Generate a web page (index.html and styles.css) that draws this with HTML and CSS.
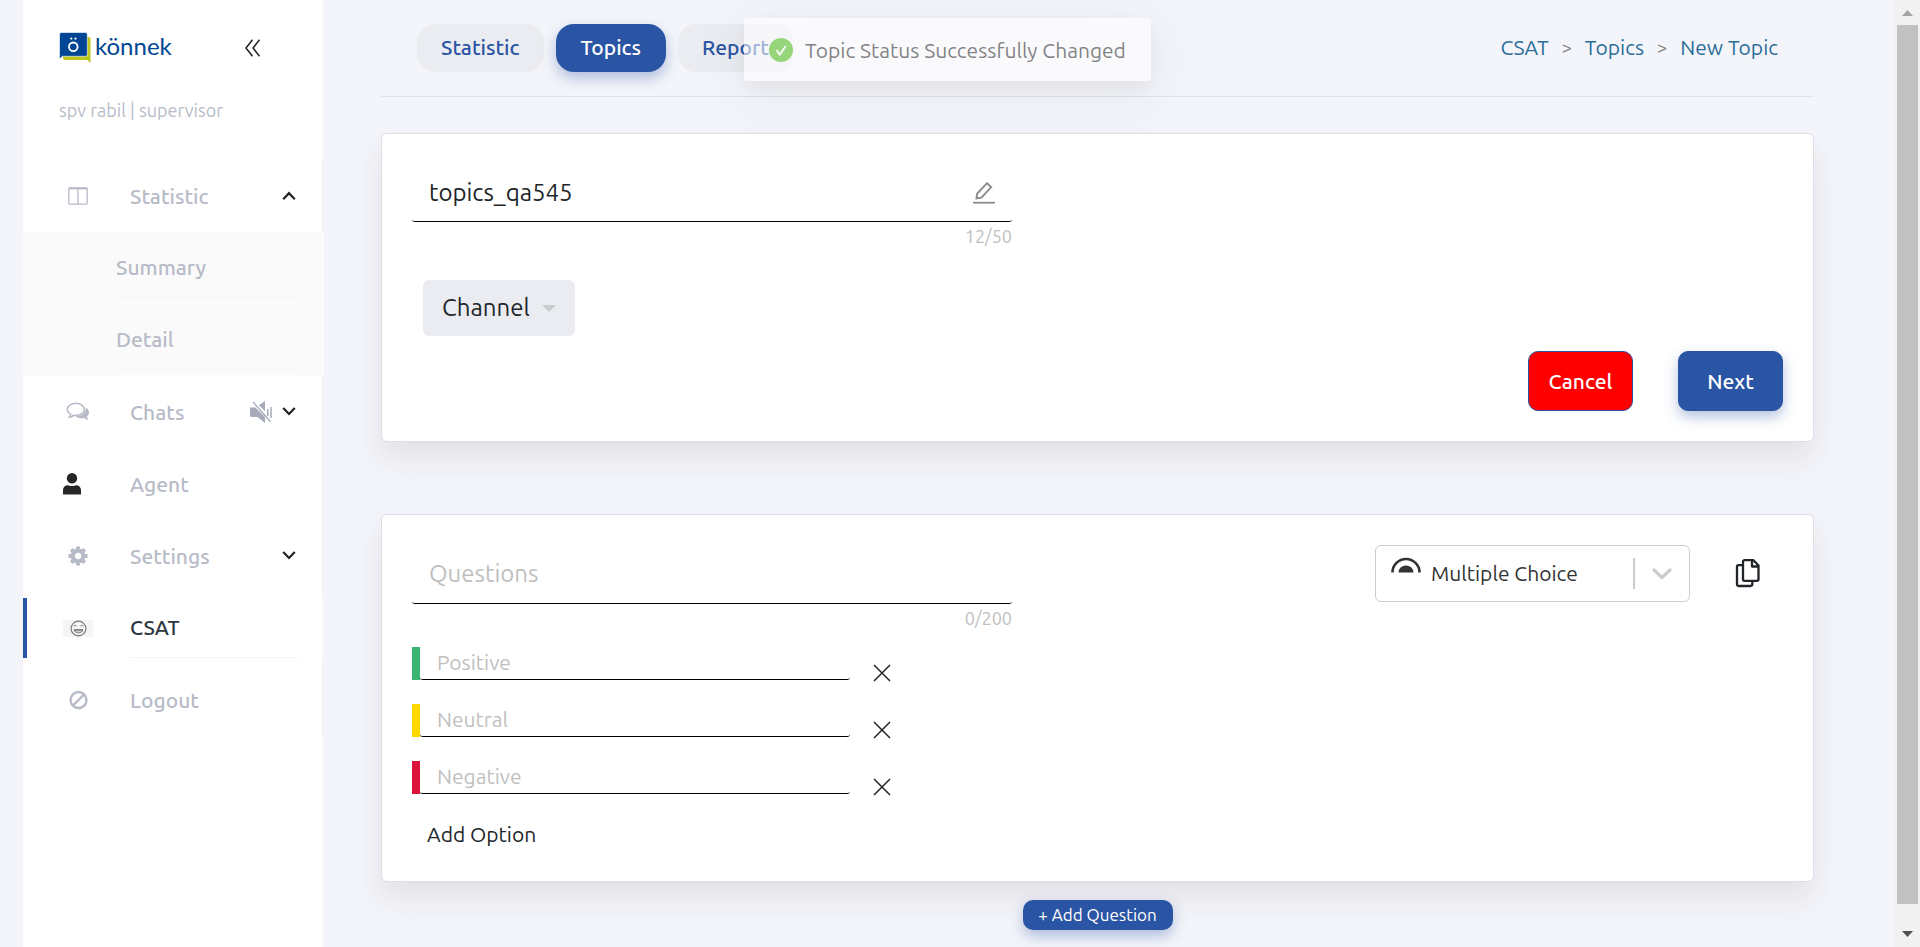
FILE: index.html
```
<!DOCTYPE html>
<html lang="en">
<head>
<meta charset="utf-8">
<title>New Topic</title>
<link rel="stylesheet" href="styles.css">
</head>
<body>
<div class="page">
  <aside class="sidebar">
    <div class="brand">
      <a class="logo" href="#" aria-label="könnek">
        <svg class="logo-mark" width="32" height="32" viewBox="0 0 32 32" aria-hidden="true">
          <path fill="#bcc61f" d="M4 5h26a1.500 1.500 0 0 1 1.500 1.500V31l-3-3H6a2 2 0 0 1-2-2z"/>
          <path fill="#004694" stroke="#fff" stroke-width=".6" d="M2.500.5h24A1.800 1.800 0 0 1 28.300 2.300v20.200a1.800 1.800 0 0 1-1.800 1.800H3.500L.500 27V2.500A2 2 0 0 1 2.500.5z"/>
          <circle cx="14.300" cy="14.800" r="4.300" fill="none" stroke="#fff" stroke-width="1.800"/>
          <circle cx="12.300" cy="6.600" r="1.100" fill="#fff"/><circle cx="16.500" cy="6.600" r="1.100" fill="#fff"/>
        </svg>
        <span class="logo-text">könnek</span>
      </a>
      <button class="collapse" type="button" aria-label="Collapse menu">
        <svg width="18" height="18" viewBox="0 0 18 18" fill="none" stroke="#222" stroke-width="1.500"><path d="M8.500.8 2 9l6.500 8.200M15.500.8 9 9l6.500 8.200"/></svg>
      </button>
    </div>
    <p class="user">spv rabil | supervisor</p>
    <nav>
      <ul class="menu">
        <li class="item">
          <a class="link" href="#">
            <span class="ico"><svg width="20" height="18" viewBox="0 0 20 18" fill="none" stroke="#b7bbc8"><rect x=".8" y=".8" width="18.400" height="16.400" rx="1" stroke-width="1.300"/><path d="M1 1.500h18" stroke-width="1.800"/><path d="M10 1v16" stroke-width="1.300"/></svg></span>
            <span class="label">Statistic</span>
          </a>
          <button class="toggle" type="button" aria-label="Close Statistic"><svg width="14" height="10" viewBox="0 0 14 10" fill="none" stroke="#222" stroke-width="2.200"><path d="M1.200 8.200 7 2.200l5.800 6"/></svg></button>
        </li>
        <li>
          <ul class="submenu">
            <li><a class="sublink" href="#"><span class="label">Summary</span></a></li>
            <li><a class="sublink" href="#"><span class="label">Detail</span></a></li>
          </ul>
        </li>
        <li class="item">
          <a class="link" href="#">
            <span class="ico"><svg width="24" height="20" viewBox="0 0 24 20"><path fill="#b7bbc8" d="M19.800 5.800c2 1 3.200 2.600 3.200 4.900 0 1.500-.8 2.800-2.100 3.800.2.900.8 1.800 1.600 3.300-1.500.2-3-.6-4.200-1.700-3.300.6-6.600 0-8.600-1.800 5.400.2 10.300-3.300 10.100-8.500z"/><path fill="none" stroke="#b7bbc8" stroke-width="1.500" d="M9.800 1.300c4.800 0 8.500 2.700 8.500 6.100s-3.700 6.100-8.500 6.100c-.8 0-1.500-.1-2.200-.2-1.200 1-2.600 1.700-4.200 1.800.8-.8 1.300-1.800 1.400-2.800C2.700 11.100 1.300 9.300 1.300 7.400c0-3.400 3.700-6.100 8.500-6.100z"/></svg></span>
            <span class="label">Chats</span>
          </a>
          <button class="mute" type="button" aria-label="Muted"><svg width="22" height="22" viewBox="0 0 22 22" fill="#a6aabb"><path d="M0 6.500h5.500L15 16v6l-7.500-6H1.500A1.500 1.500 0 0 1 0 14.500zM9 4.200 15 0v10.200zM17 8h1.500v7H17zM20.300 6h1.500v11h-1.500z"/><path d="m3 .8 17.500 20" stroke="#a6aabb" stroke-width="1.300"/></svg></button>
          <button class="toggle" type="button" aria-label="Open Chats"><svg width="14" height="10" viewBox="0 0 14 10" fill="none" stroke="#222" stroke-width="2.200"><path d="M1.200 1 7 7l5.800-6"/></svg></button>
        </li>
        <li class="item">
          <a class="link" href="#">
            <span class="ico ico-left"><svg width="18" height="22" viewBox="0 0 18 22" fill="#262626"><circle cx="9" cy="5.200" r="5.200"/><path d="M0 21.500v-4C0 14.500 2 12.300 4.800 12.300c1.500 0 2 .8 4.200.8s2.700-.8 4.200-.8c2.800 0 4.800 2.200 4.800 5.200v4z"/></svg></span>
            <span class="label">Agent</span>
          </a>
        </li>
        <li class="item">
          <a class="link" href="#">
            <span class="ico"><svg width="20" height="20" viewBox="0 0 20 20" fill="none" stroke="#b7bbc8"><circle cx="10" cy="10" r="5.300" stroke-width="4.200"/><g stroke-width="4"><path d="M10 .5v3M10 16.500v3M.5 10h3M16.500 10h3M3.300 3.300l2 2M14.700 14.700l2 2M3.300 16.700l2-2M14.700 5.300l2-2"/></g></svg></span>
            <span class="label">Settings</span>
          </a>
          <button class="toggle" type="button" aria-label="Open Settings"><svg width="14" height="10" viewBox="0 0 14 10" fill="none" stroke="#222" stroke-width="2.200"><path d="M1.200 1 7 7l5.800-6"/></svg></button>
        </li>
        <li class="item">
          <a class="link active" href="#" aria-current="page">
            <span class="ico ico-face"><svg width="17" height="17" viewBox="0 0 17 17" fill="none" stroke="#777"><circle cx="8.500" cy="8.500" r="7.400" stroke-width="1.100"/><path d="M3.500 6.200q1.500-2 3 0M10.500 6.200q1.500-2 3 0" stroke-width=".9"/><path d="M4.300 9.600h8.400c0 2.200-1.700 3.200-4.200 3.200s-4.200-1-4.200-3.200zM4.800 10.800h7.400"/></svg></span>
            <span class="label">CSAT</span>
          </a>
        </li>
        <li class="item">
          <a class="link" href="#">
            <span class="ico"><svg width="20" height="20" viewBox="0 0 20 20" fill="none" stroke="#b7bbc8" stroke-width="2.400"><circle cx="10.500" cy="10" r="8"/><path d="m5 15.500 11-11"/></svg></span>
            <span class="label">Logout</span>
          </a>
        </li>
      </ul>
    </nav>
  </aside>

  <main class="main">
    <header class="topbar">
      <nav class="tabs">
        <a class="tab" href="#">Statistic</a>
        <a class="tab current" href="#">Topics</a>
        <a class="tab" href="#">Report</a>
      </nav>
      <nav class="crumbs" aria-label="Breadcrumb">
        <a href="#">CSAT</a><span>&gt;</span><a href="#">Topics</a><span>&gt;</span><a href="#">New Topic</a>
      </nav>
    </header>

    <section class="card">
      <div class="field">
        <div class="line">
          <input class="big" type="text" value="topics_qa545" aria-label="Topic name">
          <svg width="22" height="22" viewBox="0 0 22 22" fill="none" stroke="#8c8c8c" stroke-width="1.900"><path d="M0 20.700h22" stroke-width="1.800"/><path d="m3.500 16.400.6-4.600L14 1.200l4.200 3.900L8.400 15.700z"/></svg>
        </div>
        <p class="count">12/50</p>
      </div>
      <button class="channel" type="button">Channel <svg width="14" height="7" viewBox="0 0 14 7" fill="#cbcccf"><path d="M0 0h14L7 7z"/></svg></button>
      <div class="actions">
        <button class="btn cancel" type="button">Cancel</button>
        <button class="btn next" type="button">Next</button>
      </div>
    </section>

    <section class="card">
      <div class="question">
        <div class="field">
          <div class="line"><input class="big" type="text" placeholder="Questions" aria-label="Question"></div>
          <p class="count">0/200</p>
        </div>
        <div class="qtools">
          <div class="select">
            <svg class="arc" width="30" height="16" viewBox="0 0 30 16"><path d="M1.500 15.500a13.500 13.500 0 0 1 27 0" fill="none" stroke="#333" stroke-width="2.600"/><path d="M7.500 15.500a7.500 7 0 0 1 15 0z" fill="#333"/></svg>
            <select aria-label="Question type"><option>Multiple Choice</option></select>
            <span class="sep"></span>
            <svg width="20" height="12" viewBox="0 0 20 12" fill="none" stroke="#ccc" stroke-width="3.200" stroke-linecap="round"><path d="m2 2 8 7.500L18 2"/></svg>
          </div>
          <button class="copy" type="button" aria-label="Duplicate"><svg width="26" height="30" viewBox="0 0 26 30" fill="none" stroke="#212529" stroke-width="2.300" stroke-linejoin="round"><path d="M9 2.200h9.500l5 5.300v13.800a1.500 1.500 0 0 1-1.500 1.500H9.500A1.500 1.500 0 0 1 8 21.300V3.700A1.500 1.500 0 0 1 9.500 2.200M17 2.500v6h6"/><path d="M8 7.200H3.500A1.500 1.500 0 0 0 2 8.700v17.800A1.500 1.500 0 0 0 3.500 28h12.300a1.500 1.500 0 0 0 1.500-1.500V23"/></svg></button>
        </div>
      </div>
      <ul class="options">
        <li class="option positive"><input type="text" placeholder="Positive" aria-label="Positive option"><button type="button" aria-label="Remove"><svg width="18" height="18" viewBox="0 0 18 18" stroke="#222" stroke-width="1.500"><path d="m1 1 16 16M17 1 1 17"/></svg></button></li>
        <li class="option neutral"><input type="text" placeholder="Neutral" aria-label="Neutral option"><button type="button" aria-label="Remove"><svg width="18" height="18" viewBox="0 0 18 18" stroke="#222" stroke-width="1.500"><path d="m1 1 16 16M17 1 1 17"/></svg></button></li>
        <li class="option negative"><input type="text" placeholder="Negative" aria-label="Negative option"><button type="button" aria-label="Remove"><svg width="18" height="18" viewBox="0 0 18 18" stroke="#222" stroke-width="1.500"><path d="m1 1 16 16M17 1 1 17"/></svg></button></li>
      </ul>
      <button class="add-option" type="button">Add Option</button>
    </section>

    <button class="add-question" type="button">+ Add Question</button>
  </main>

  <div class="toast-layer">
    <div class="toast" role="status">
      <svg width="24" height="24" viewBox="0 0 24 24"><circle cx="12" cy="12" r="12" fill="#52c41a"/><path d="m7.500 12 3.300 4.500 6-8.500" fill="none" stroke="#fff" stroke-width="2"/></svg>
      <span>Topic Status Successfully Changed</span>
    </div>
  </div>

  <div class="scrollbar" aria-hidden="true">
    <svg width="11" height="6" viewBox="0 0 11 6" fill="#a3a3a3"><path d="M0 6h11L5.500 0z"/></svg>
    <div class="thumb"></div>
    <svg width="11" height="6" viewBox="0 0 11 6" fill="#505050"><path d="M0 0h11L5.500 6z"/></svg>
  </div>
</div>
</body>
</html>
```
FILE: styles.css
```
* { box-sizing: border-box; }

body {
  margin: 0;
  background: #f4f5fa;
  color: #212529;
  font-family: "Ubuntu", "Open Sans", "Noto Sans", sans-serif;
  font-size: 21px;
  line-height: 30px;
}

ul { list-style: none; margin: 0; padding: 0; }
p { margin: 0; }
a { color: inherit; text-decoration: none; }
svg { display: block; flex: none; }
button {
  padding: 0;
  border: 0;
  background: none;
  color: inherit;
  font: inherit;
  cursor: pointer;
}
input, select {
  min-width: 0;
  border: 0;
  outline: 0;
  background: none;
  color: inherit;
  font: inherit;
}
input::placeholder { color: #bfbfbf; opacity: 1; }

.page {
  position: relative;
  display: flex;
  min-height: 100vh;
  padding-left: 23px;
}

/* sidebar */
.sidebar { flex: 0 0 300px; background: #fff; color: #b7bbc8; }
.brand {
  display: flex;
  align-items: center;
  justify-content: space-between;
  padding: 32px 61px 0 36px;
}
.logo { display: flex; align-items: center; gap: 4px; color: #004694; }
.logo-text { font-family: Lato, sans-serif; font-size: 24px; line-height: 28px; padding-bottom: 4px; }
.user { padding: 31px 36px 0; font-size: 18px; }
.menu { padding-top: 35px; font-weight: 500; }
.item {
  display: flex;
  align-items: center;
  height: 72px;
  padding: 6px 0;
  box-shadow: inset -1px 0 #f0f1f4;
}
.link {
  flex: 1;
  display: flex;
  align-items: center;
  height: 60px;
  padding-left: 40px;
  border-left: 0 solid #2a54a4;
}
.ico { display: flex; flex: none; justify-content: center; width: 30px; margin-right: 37px; }
.ico-left { justify-content: flex-start; }
.ico-face { background: #f5f5f5; }
.active {
  padding-left: 36px;
  border-left-width: 4px;
  background: #fff;
  color: #2b3640;
}
.active .label {
  flex: 1;
  margin-right: 24px;
  padding: 14px 0 15px;
  border-bottom: 1px solid #f4f4f5;
}
.mute { margin-right: 10px; }
.toggle { margin-right: 27px; }
.submenu { margin-right: 1px; padding-bottom: 6px; background: #fafafa; }
.sublink { display: block; margin: 0 23px 0 93px; }
.sublink .label { display: block; padding: 20px 0 15px; border-bottom: 1px solid #f5f5f6; }
.submenu li + li { padding-top: 6px; }

/* main column */
.main { flex: 1; min-width: 0; padding: 0 81px 16px 58px; }
.topbar {
  display: flex;
  align-items: center;
  justify-content: space-between;
  height: 97px;
  padding: 0 36px;
  border-bottom: 1px solid #e3e4e9;
}
.tabs { display: flex; gap: 12px; }
.tab {
  padding: 8px 25px 10px 24px;
  border-radius: 18px;
  background: #ebecf1;
  color: #2a54a4;
  font-weight: 500;
}
.tab.current {
  background: #2a54a4;
  color: #fff;
  box-shadow: 0 6px 14px rgba(42, 84, 164, .35);
}
.crumbs { display: flex; gap: 13px; padding-bottom: 2px; color: #2b6d99; }
.crumbs span { color: #858585; font-size: 18px; }

.card {
  margin-top: 36px;
  padding: 30px;
  border: 1px solid #dedfe2;
  border-radius: 6px;
  background: #fff;
  box-shadow: 0 16px 30px rgba(40, 20, 30, .09);
}
.card + .card { margin-top: 72px; }
.field { width: 600px; }
.line {
  display: flex;
  align-items: center;
  height: 58px;
  padding: 0 17px;
  border-bottom: 1px solid #000;
  border-radius: 3px;
}
.big { flex: 1; height: 56px; padding: 0; font-size: 24px; }
.count { color: #bfbfbf; font-size: 18px; line-height: 28px; padding-bottom: 2px; text-align: right; }
.channel {
  display: flex;
  align-items: center;
  gap: 12px;
  height: 56px;
  margin: 28px 0 0 11px;
  padding: 0 19px;
  border-radius: 6px;
  background: #ebecf1;
  font-size: 24px;
}
.actions { display: flex; justify-content: flex-end; gap: 45px; margin-top: 15px; }
.btn {
  width: 105px;
  height: 60px;
  border: 1px solid #2a54a4;
  border-radius: 10px;
  background: #2a54a4;
  color: #fff;
  font-weight: 500;
}
.cancel { background: red; }
.next { box-shadow: 0 6px 14px rgba(42, 84, 164, .35); }

.question { display: flex; justify-content: space-between; }
.question .line { height: 59px; padding-bottom: 2px; }
.qtools { display: flex; align-items: flex-start; }
.select {
  display: flex;
  align-items: center;
  width: 315px;
  height: 57px;
  padding: 0 17px 0 15px;
  border: 1px solid #ccc;
  border-radius: 6px;
  color: #333;
}
.arc { margin-bottom: 18px; }
.select select { flex: 1; height: 55px; margin-left: 10px; padding: 0 0 2px; appearance: none; }
.sep { width: 2px; height: 31px; margin-right: 17px; background: #ccc; }
.copy { margin: 13px 22px 0 45px; }

.options { display: grid; gap: 24px; margin-top: 13px; }
.option { display: flex; height: 33px; border-left: 8px solid; }
.option input {
  width: 430px;
  height: 33px;
  padding: 0 17px 2px;
  border-bottom: 1px solid #000;
  border-radius: 3px;
  color: #212529;
}
.option button { margin: 17px 0 0 23px; height: 18px; }
.positive { border-color: #3cb371; }
.neutral { border-color: #ffd700; }
.negative { border-color: #dc143c; }
.add-option { display: block; margin: 25px 0 2px 15px; }
.add-question {
  display: block;
  width: 150px;
  height: 30px;
  margin: 18px auto 0;
  border-radius: 10px;
  background: #2a54a4;
  color: #fff;
  font-size: 17px;
  box-shadow: 0 6px 14px rgba(42, 84, 164, .35);
}

/* notification over the page */
.toast-layer {
  position: absolute;
  top: 18px;
  left: 0;
  right: 25px;
  display: flex;
  justify-content: center;
  pointer-events: none;
}
.toast {
  display: flex;
  align-items: center;
  gap: 12px;
  height: 63px;
  padding: 0 25px;
  border-radius: 3px;
  background: #fff;
  color: #262626;
  opacity: .55;
  box-shadow: 0 8px 20px rgba(0, 0, 0, .1), 0 10px 60px rgba(0, 0, 0, .08);
}

/* scroll track */
.scrollbar {
  flex: 0 0 25px;
  display: flex;
  flex-direction: column;
  align-items: center;
  gap: 9px;
  padding: 10px 2px;
  background: #f1f1f1;
}
.thumb { flex: 1; align-self: stretch; margin-bottom: 18px; background: #c1c1c1; }
```
